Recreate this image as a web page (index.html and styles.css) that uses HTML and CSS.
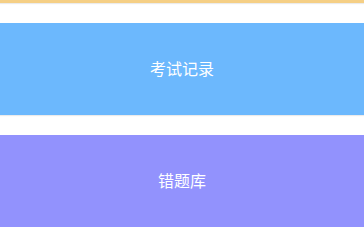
FILE: index.html
```html
<!DOCTYPE html>
<html lang="zh">
<head>
<meta charset="utf-8">
<link rel="stylesheet" href="styles.css">
</head>
<body>
<div class="list">
  <div class="card card-orange"></div>
  <div class="card card-blue"><span class="label">考试记录</span></div>
  <div class="card card-purple"><span class="label">错题库</span></div>
</div>
</body>
</html>
```
FILE: styles.css
```css
html, body {
  margin: 0;
  padding: 0;
  background: #ffffff;
  overflow: hidden;
}
.list {
  display: flex;
  flex-direction: column;
  gap: 20px;
  margin-top: -89px;
}
.card {
  height: 92px;
  display: flex;
  align-items: center;
  justify-content: center;
  box-shadow: 0 1px 1px rgba(0, 0, 0, 0.08);
}
.card-orange { background: #f5cf85; }
.card-blue { background: #6cb8fd; }
.card-purple { background: #9292fd; }
.label {
  color: #ffffff;
  font-family: "Noto Sans CJK SC", "Noto Sans", sans-serif;
  font-size: 16px;
  line-height: 1;
  margin-top: -2px;
}
```
